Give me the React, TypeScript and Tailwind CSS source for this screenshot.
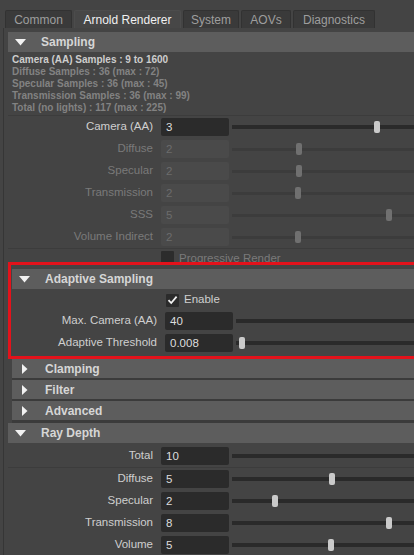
import * as React from "react"

type SliderRowProps = {
  label: string
  value: string
  handle?: number
  disabled?: boolean
}

const tabs = ["Common", "Arnold Renderer", "System", "AOVs", "Diagnostics"]
const tabWidths = ["w-[67px]", "w-[107px]", "w-[56px]", "w-[50px]", "w-[82px]"]

function Triangle({ open }: { open: boolean }) {
  if (open) {
    return (
      <svg width="11" height="7" viewBox="0 0 11 7" className="ml-[7px]">
        <path d="M0 0H11L5.5 6.5Z" fill="#f2f2f2" />
      </svg>
    )
  }
  return (
    <svg width="6" height="10" viewBox="0 0 6 10" className="ml-[10px]">
      <path d="M0 0L5.5 5L0 10Z" fill="#f2f2f2" />
    </svg>
  )
}

function SectionHeader({ title, open, className = "" }: { title: string; open: boolean; className?: string }) {
  return (
    <div className={`flex items-center bg-[#5d5d5d] ${open ? "h-[20px]" : "h-[19px]"} ${className}`}>
      <div className="flex w-[33px] shrink-0 items-center">
        <Triangle open={open} />
      </div>
      <span className="text-[12px] font-bold text-[#d6d6d6]">{title}</span>
    </div>
  )
}

function SliderRow({ label, value, handle, disabled }: SliderRowProps) {
  return (
    <div className="flex h-[22px] items-center">
      <div className={`w-[145px] shrink-0 text-right text-[11.5px] ${disabled ? "text-[#7a7a7a]" : "text-[#cfcfcf]"}`}>
        {label}
      </div>
      <div
        className={`ml-[8px] flex h-[18px] w-[68px] shrink-0 items-center rounded-[2px] pl-[5px] pt-[1px] text-[11.5px] ${
          disabled ? "bg-[#4a4a4a] text-[#6c6c6c]" : "bg-[#2b2b2b] text-[#dedede]"
        }`}
      >
        {value}
      </div>
      {/* track */}
      <div className="relative ml-[3px] flex h-full flex-1 items-center">
        <div className={`w-full ${disabled ? "h-[3px] bg-[#3c3c3c]" : "h-[4px] bg-[#2a2a2a]"}`} />
        {handle !== undefined && (
          <div
            className={`absolute top-[5px] h-[12px] w-[6px] rounded-[2px] ${disabled ? "bg-[#707070]" : "bg-[#cacaca]"}`}
            style={{ left: handle }}
          />
        )}
      </div>
    </div>
  )
}

export default function App() {
  return (
    <div className="h-[555px] w-[414px] overflow-hidden bg-[#444444] font-['Liberation_Sans',Arial,sans-serif] leading-none">
      <div className="h-[10px]" />

      {/* Tabs */}
      <div className="flex h-[18px] gap-[2px] pl-[5px]">
        {tabs.map((t, i) => (
          <div
            key={t}
            className={`flex items-center justify-center rounded-t-[2px] border border-b-0 text-[12px] ${tabWidths[i]} ${
              i === 1
                ? "border-[#4c4c4c] bg-[#474747] text-[#f0f0f0]"
                : "border-[#323232] bg-[#3a3a3a] text-[#9e9e9e]"
            }`}
          >
            {t}
          </div>
        ))}
      </div>

      <div className="flex">
        <div className="w-[8px] shrink-0">
          <div className="ml-[3px] h-full w-px bg-[#363636]" />
        </div>

        <div className="min-w-0 flex-1 pt-[4px]">
          {/* Sampling */}
          <SectionHeader title="Sampling" open />
          <div className="mt-[2px] pl-[4px] text-[10px] font-bold leading-[12px]">
            <div className="text-[#cdcdcd]">Camera (AA) Samples : 9 to 1600</div>
            <div className="text-[#828282]">Diffuse Samples : 36 (max : 72)</div>
            <div className="text-[#828282]">Specular Samples : 36 (max : 45)</div>
            <div className="text-[#828282]">Transmission Samples : 36 (max : 99)</div>
            <div className="text-[#828282]">Total (no lights) : 117 (max : 225)</div>
          </div>
          <div className="mt-[1px] border-t border-[#3c3c3c]">
            <SliderRow label="Camera (AA)" value="3" handle={142} />
            <SliderRow label="Diffuse" value="2" handle={64} disabled />
            <SliderRow label="Specular" value="2" handle={64} disabled />
            <SliderRow label="Transmission" value="2" handle={63} disabled />
            <SliderRow label="SSS" value="5" handle={154} disabled />
            <SliderRow label="Volume Indirect" value="2" handle={63} disabled />
          </div>
          <div className="flex h-[14px] items-start overflow-hidden border-t border-[#3c3c3c] pl-[153px]">
            <div className="mt-[2px] h-[13px] w-[13px] rounded-[1px] bg-[#2c2c2c]" />
            <span className="ml-[5px] mt-[3px] text-[11.5px] leading-[13px] text-[#7a7a7a]">Progressive Render</span>
          </div>

          {/* Adaptive Sampling (highlighted) */}
          <div className="border-[3px] border-r-0 border-[#e3121b] pb-[2px] pl-[1px] pt-[4px]">
            <SectionHeader title="Adaptive Sampling" open />
            <div className="mt-[1px] flex h-[20px] items-center pl-[154px]">
              <div className="flex h-[13px] w-[13px] items-center justify-center rounded-[1px] bg-[#2b2b2b]">
                <svg width="11" height="10" viewBox="0 0 11 10">
                  <path d="M1.5 5.2L4.2 8L9.6 1.6" fill="none" stroke="#f2f2f2" strokeWidth="1.8" />
                </svg>
              </div>
              <span className="ml-[5px] text-[11.5px] text-[#cfcfcf]">Enable</span>
            </div>
            <SliderRow label="Max. Camera (AA)" value="40" />
            <SliderRow label="Adaptive Threshold" value="0.008" handle={3} />
          </div>

          {/* Collapsed sections */}
          <div className="ml-[4px] flex flex-col gap-[2px] bg-[#3b3b3b] pb-[3px]">
            <SectionHeader title="Clamping" open={false} />
            <SectionHeader title="Filter" open={false} />
            <SectionHeader title="Advanced" open={false} />
          </div>

          {/* Ray Depth */}
          <SectionHeader title="Ray Depth" open />
          <div className="mt-[2px]">
            <SliderRow label="Total" value="10" />
            <div className="border-t border-[#3c3c3c]">
              <SliderRow label="Diffuse" value="5" handle={97} />
              <SliderRow label="Specular" value="2" handle={40} />
              <SliderRow label="Transmission" value="8" handle={154} />
              <SliderRow label="Volume" value="5" handle={96} />
            </div>
          </div>
        </div>
      </div>
    </div>
  )
}
